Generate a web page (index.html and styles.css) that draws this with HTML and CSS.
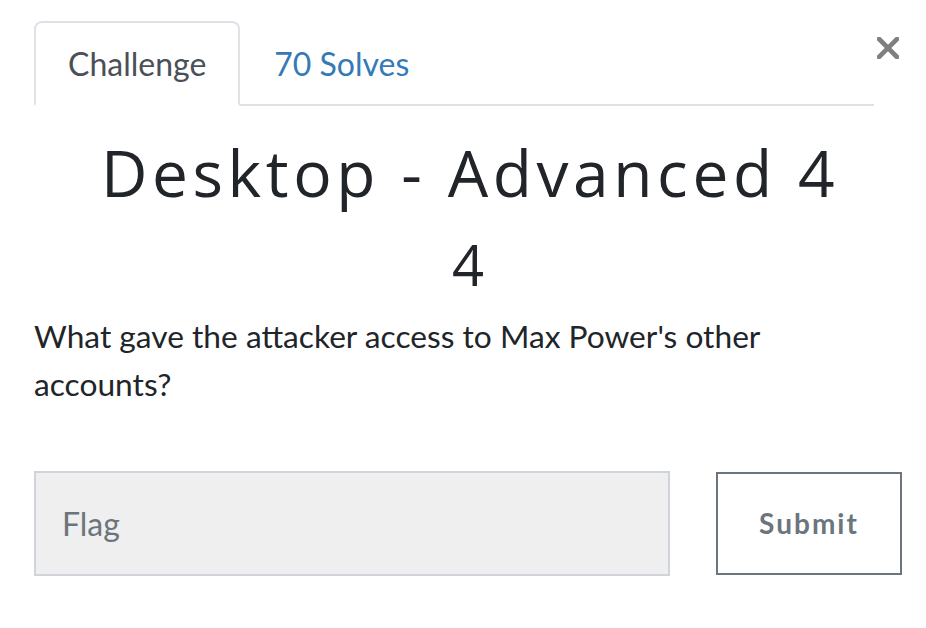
FILE: index.html
```html
<!DOCTYPE html>
<html>
<head>
<meta charset="utf-8">
<link rel="stylesheet" href="styles.css">
</head>
<body>
<div class="modal">
  <button class="close" aria-label="Close">
    <svg width="22" height="22" viewBox="0 0 22 22"><path d="M2 2 L20 20 M20 2 L2 20" stroke="#7f7f7f" stroke-width="4.6" stroke-linecap="square" fill="none"/></svg>
  </button>
  <div class="nav">
    <div class="tab active">Challenge</div>
    <div class="tab link">70 Solves</div>
  </div>
  <h2 class="name">Desktop - Advanced 4</h2>
  <h3 class="value">4</h3>
  <p class="desc">What gave the attacker access to Max Power's other accounts?</p>
  <form class="row">
    <input class="flag" type="text" placeholder="Flag">
    <button type="button" class="submit">Submit</button>
  </form>
</div>
</body>
</html>
```
FILE: styles.css
```css
html, body {
  margin: 0;
  padding: 0;
  background: #fff;
}
body {
  font-family: Lato, "Liberation Sans", sans-serif;
  color: #212529;
}
.modal {
  position: relative;
  width: 868px;
  padding: 21px 0 0 34px;
}
.close {
  position: absolute;
  left: 877px;
  top: 37px;
  width: 22px;
  height: 22px;
  padding: 0;
  border: 0;
  background: none;
  display: block;
}
.close svg { display: block; }
.nav {
  display: flex;
  width: 840px;
  border-bottom: 2px solid #dee2e6;
}
.tab {
  font-size: 32px;
  line-height: 48px;
  padding: 17px 32px 16px;
  border: 2px solid transparent;
  border-radius: 8px 8px 0 0;
  margin-bottom: -2px;
}
.tab.active {
  color: #495057;
  border-color: #dee2e6 #dee2e6 #fff;
  background: #fff;
}
.tab.link {
  color: #337ab7;
}
.name {
  margin: 29px 0 0;
  padding-left: 4px;
  text-align: center;
  font-family: "Open Sans", sans-serif;
  font-weight: 400;
  font-size: 64px;
  line-height: 1.2;
  letter-spacing: 4.6px;
  color: #212529;
}
.value {
  margin: 19px 0 0;
  text-align: center;
  font-family: "Open Sans", sans-serif;
  font-weight: 400;
  font-size: 56px;
  line-height: 1.2;
  color: #212529;
}
.desc {
  margin: 14px 0 0;
  font-size: 31.7px;
  line-height: 48px;
  width: 760px;
}
.row {
  display: flex;
  gap: 46px;
  margin-top: 63px;
}
.flag {
  box-sizing: border-box;
  width: 636px;
  height: 105px;
  border: 2px solid #ced4da;
  background: #efefef;
  padding: 0 26px;
  font-family: Lato, sans-serif;
  font-size: 32px;
  color: #495057;
  outline: none;
}
.flag::placeholder { color: #6c757d; }
.submit {
  box-sizing: border-box;
  width: 186px;
  height: 103px;
  margin-top: 1px;
  border: 2px solid #6c757d;
  background: #fff;
  color: #6c757d;
  font-family: Lato, sans-serif;
  font-weight: 700;
  font-size: 28px;
  letter-spacing: 2px;
}
```
